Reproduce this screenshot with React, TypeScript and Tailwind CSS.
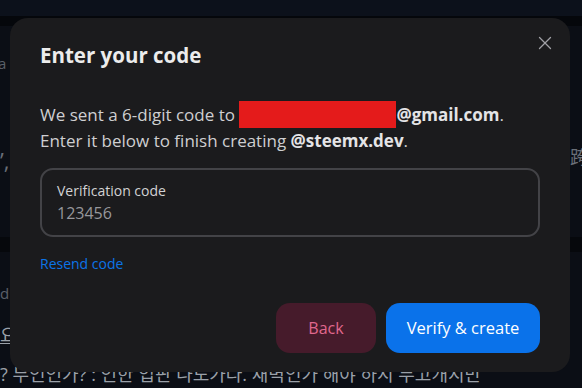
import { X } from "lucide-react";

const font = { fontFamily: "'Open Sans', 'Noto Sans CJK KR', sans-serif" };

function Backdrop() {
  return (
    <div className="flex flex-col h-[388px] w-full bg-[#0b0e15] text-[#5b6069] overflow-hidden">
      <div className="h-[17px] bg-[#0c111b]" />
      <div className="h-[10px] bg-[#05070b]" />
      <div className="h-[220px] flex flex-col pt-[26px] gap-[70px] text-[15px]">
        <span className="-ml-[2px]">a c</span>
        <div className="flex justify-between">
          <span className="text-[22px] text-[#6a6f78]">’,</span>
          <span className="text-[18px] text-[#6a6f78] -mr-[6px]">跨</span>
        </div>
      </div>
      <div className="h-[15px] bg-[#06080c]" />
      <div className="flex flex-col pt-[30px] gap-[18px]">
        <span className="text-[15px]">d</span>
        <span className="text-[18px] text-[#9aa0a8] underline">요</span>
        <span className="text-[18px] text-[#9aa0a8] whitespace-nowrap -mt-[6px]">
          ? 무인인가? : 인한 입판 나도가다. 새벽인가 해야 하지 무고개지만
        </span>
      </div>
    </div>
  );
}

function CodeDialog() {
  return (
    <div className="absolute left-[10px] top-[18px] w-[560px] h-[354px] rounded-[18px] bg-[#1b1b1d] px-[30px] pt-[21px] flex flex-col">
      <button className="absolute right-[14px] top-[14px] text-[#a0a0a6]">
        <X size={22} strokeWidth={1.4} />
      </button>
      <h2 className="text-[20.5px] font-bold text-[#ececec] leading-[32px]">Enter your code</h2>
      <p className="mt-[31px] text-[17px] leading-[26px] text-[#cfcfd1]">
        We sent a 6-digit code to{" "}
        <span className="inline-block align-middle w-[157px] h-[27px] bg-[#e41b1b] -mt-[3px]" />
        <span className="font-bold text-[#e4e4e6]">@gmail.com</span>.
        <br />
        Enter it below to finish creating{" "}
        <span className="font-bold text-[#e4e4e6]">@steemx.dev</span>.
      </p>
      <div className="mt-[14px] h-[69px] rounded-[13px] border-2 border-[#434347] px-[15px] pt-[11px] flex flex-col">
        <label className="text-[14px] leading-[20px] text-[#d2d2d4]">Verification code</label>
        <span className="text-[16px] leading-[24px] text-[#97979b]">123456</span>
      </div>
      <a className="mt-[17px] text-[14px] leading-[20px] text-[#0b74e8] w-fit">Resend code</a>
      <div className="mt-auto mb-[19px] flex justify-end gap-[10px]">
        <button className="w-[100px] h-[50px] rounded-[14px] bg-[#461b2b] text-[16px] text-[#e0688e]">
          Back
        </button>
        <button className="w-[154px] h-[50px] rounded-[14px] bg-[#0a72ea] text-[16.5px] font-medium text-white">
          Verify &amp; create
        </button>
      </div>
    </div>
  );
}

export default function App() {
  return (
    <div className="relative w-[582px] h-[388px] overflow-hidden" style={font}>
      <Backdrop />
      <CodeDialog />
    </div>
  );
}
